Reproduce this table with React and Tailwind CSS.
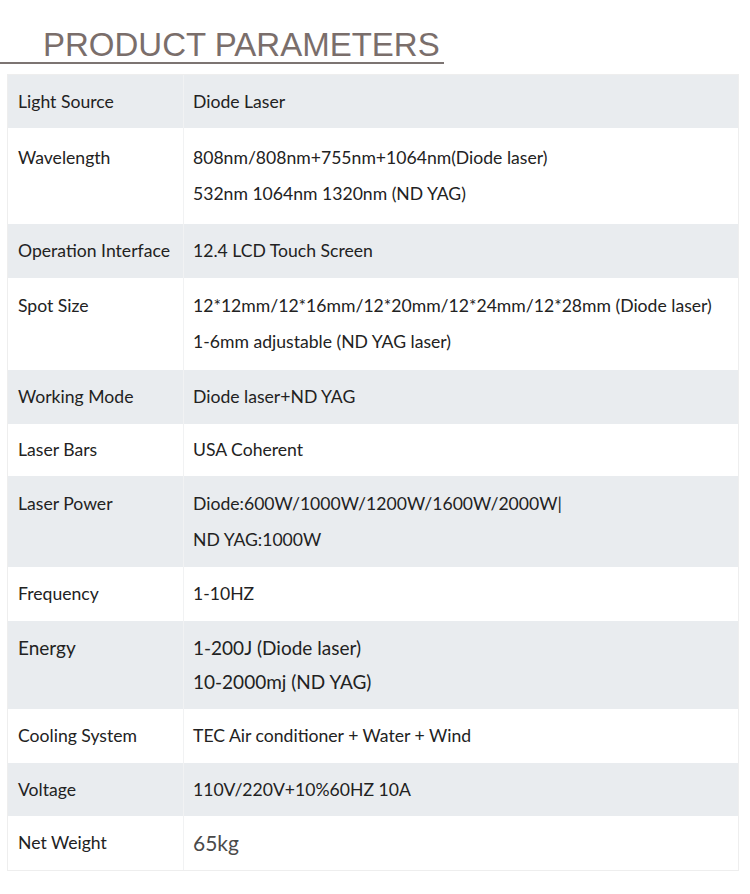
import React from "react";

const rows = [
  { label: "Light Source", lines: ["Diode Laser"], h: "h-[53px]", gray: true },
  {
    label: "Wavelength",
    lines: ["808nm/808nm+755nm+1064nm(Diode laser)", "532nm 1064nm 1320nm (ND YAG)"],
    h: "h-[96px]",
  },
  { label: "Operation Interface", lines: ["12.4 LCD Touch Screen"], h: "h-[54px]", gray: true },
  {
    label: "Spot Size",
    lines: ["12*12mm/12*16mm/12*20mm/12*24mm/12*28mm (Diode laser)", "1-6mm adjustable (ND YAG laser)"],
    h: "h-[92px]",
  },
  { label: "Working Mode", lines: ["Diode laser+ND YAG"], h: "h-[54px]", gray: true },
  { label: "Laser Bars", lines: ["USA Coherent"], h: "h-[52px]" },
  {
    label: "Laser Power",
    lines: ["Diode:600W/1000W/1200W/1600W/2000W|", "ND YAG:1000W"],
    h: "h-[91px]",
    gray: true,
  },
  { label: "Frequency", lines: ["1-10HZ"], h: "h-[54px]" },
  {
    label: "Energy",
    lines: ["1-200J (Diode laser)", "10-2000mj (ND YAG)"],
    h: "h-[88px]",
    gray: true,
    big: true,
  },
  { label: "Cooling System", lines: ["TEC Air conditioner + Water + Wind"], h: "h-[54px]" },
  { label: "Voltage", lines: ["110V/220V+10%60HZ 10A"], h: "h-[53px]", gray: true },
  { label: "Net Weight", lines: ["65kg"], h: "h-[54px]", weight: true },
];

function ParamRow({ row }) {
  const text = row.big ? "text-[19px] leading-[34px]" : "text-[17.6px] leading-9";
  return (
    <div className={`flex ${row.h} ${row.gray ? "bg-[#e9ecef]" : "bg-white"}`}>
      <div className={`w-[176px] shrink-0 pl-[10px] flex flex-col justify-center border-r border-[#f1f2f3] ${text}`}>
        <div>{row.label}</div>
        {row.lines.length > 1 && <div className={row.big ? "h-[34px]" : "h-9"} />}
      </div>
      <div className={`flex-1 pl-[9px] flex flex-col justify-center ${text}`}>
        {row.lines.map((line) => (
          <div
            key={line}
            className={row.weight ? "text-[21px] text-[#4a4a4a]" : ""}
          >
            {line}
          </div>
        ))}
      </div>
    </div>
  );
}

export default function App() {
  return (
    <div className="w-[750px] h-[894px] bg-white text-[#222]">
      <div className="w-[444px] pl-[43px] pt-[29px] pb-px border-b-2 border-[#7c7472]">
        <h1 className="font-['Liberation_Sans',Arial,sans-serif] text-[33px] leading-8 text-[#7a6e6b]">
          PRODUCT PARAMETERS
        </h1>
      </div>
      <div className="mt-[10px] ml-[7px] w-[732px] border border-[#eeeeee] font-['Lato','Noto_Sans',sans-serif]">
        {rows.map((row) => (
          <ParamRow key={row.label} row={row} />
        ))}
      </div>
    </div>
  );
}
